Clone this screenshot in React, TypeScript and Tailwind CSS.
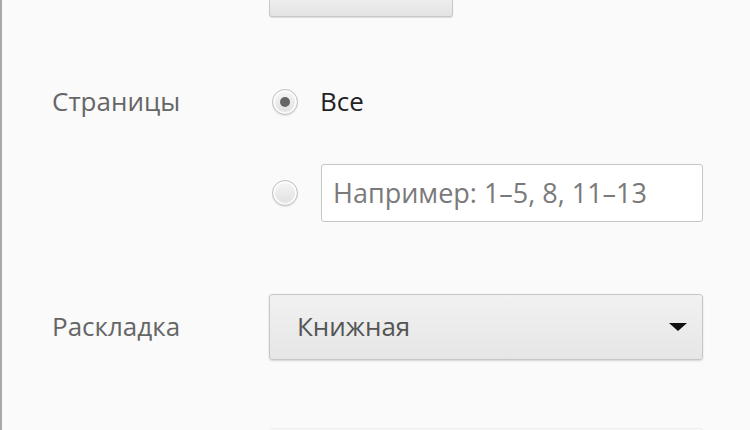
export default function App() {
  return (
    <div
      className="h-[430px] w-[750px] overflow-hidden border-l-2 border-[#a8a8a8] bg-[#fafafa] text-[26px] leading-none"
      style={{ fontFamily: '"Open Sans", "Noto Sans", sans-serif' }}
    >
      <div className="pl-[48px]">
        {/* Top button, cut off by the window */}
        <div className="flex">
          <div className="w-[219px]" />
          <div className="h-[17px] w-[184px] rounded-b-[3px] border border-t-0 border-[#c8c8c8] bg-gradient-to-b from-[#ededed] to-[#e4e4e4] shadow-[0_1px_1px_rgba(0,0,0,0.12)]" />
        </div>

        {/* Pages */}
        <div className="mt-[70px] flex h-[30px] items-center">
          <div className="w-[219px] pb-[2px] pl-[2px] text-[#666]">Страницы</div>
          <div className="flex items-center">
            <span className="ml-[3px] flex h-[26px] w-[26px] items-center justify-center rounded-full border border-[#c0c0c0] bg-gradient-to-b from-[#f6f6f6] to-[#e0e0e0] shadow-[inset_0_0_0_2px_rgba(255,255,255,0.8),0_1px_1px_rgba(0,0,0,0.1)]">
              <span className="h-[10px] w-[10px] rounded-full bg-[#666]" />
            </span>
            <span className="ml-[22px] pb-[2px] text-[#222]">Все</span>
          </div>
        </div>

        <div className="mt-[47px] flex h-[58px] items-center">
          <div className="w-[219px]" />
          <span className="ml-[3px] h-[26px] w-[26px] rounded-full border border-[#c0c0c0] bg-gradient-to-b from-[#f6f6f6] to-[#e0e0e0] shadow-[inset_0_0_0_2px_rgba(255,255,255,0.8),0_1px_1px_rgba(0,0,0,0.1)]" />
          <div className="ml-[23px] flex h-[58px] w-[382px] items-center rounded-[3px] border border-[#c6c6c6] bg-white pb-[2px] pl-[11px] text-[27px] text-[#7a7a7a]">
            Например: 1–5, 8, 11–13
          </div>
        </div>

        {/* Layout */}
        <div className="mt-[72px] flex h-[66px] items-center">
          <div className="w-[219px] pb-[2px] pl-[2px] text-[#666]">Раскладка</div>
          <div className="flex h-[66px] w-[434px] items-center justify-between rounded-[3px] border border-[#c6c6c6] bg-gradient-to-b from-[#f1f1f1] to-[#e6e6e6] pl-[27px] pr-[14px] text-[#555] shadow-[0_1px_2px_rgba(0,0,0,0.15)]">
            <span className="pb-[2px]">Книжная</span>
            <svg width="20" height="10" viewBox="0 0 20 10">
              <path d="M1 1 L19 1 L10 9 Z" fill="#111" />
            </svg>
          </div>
        </div>

        {/* Next control, cut off */}
        <div className="mt-[68px] flex">
          <div className="w-[219px]" />
          <div className="h-[20px] w-[434px] rounded-t-[3px] border border-b-0 border-[#ededed] bg-[#f8f8f8]" />
        </div>
      </div>
    </div>
  )
}
